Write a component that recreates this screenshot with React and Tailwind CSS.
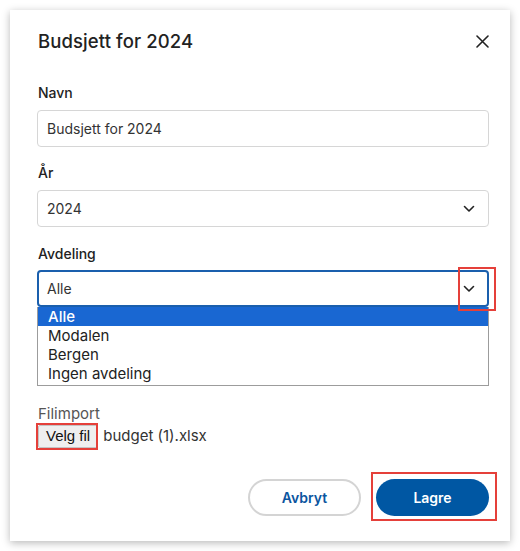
import React from 'react';

const font = { fontFamily: 'Inter, "Noto Sans", sans-serif' };

const Chevron = () => (
  <svg width="12" height="8" viewBox="0 0 12 8" fill="none" stroke="#222" strokeWidth="1.6" strokeLinecap="round" strokeLinejoin="round">
    <path d="M1.5 1.5 6 6l4.5-4.5" />
  </svg>
);

const App = () => {
  const options = ['Alle', 'Modalen', 'Bergen', 'Ingen avdeling'];

  return (
    <div className="w-[520px] h-[551px] bg-white p-[10px]" style={font}>
      <div className="relative w-[500px] h-[531px] bg-white shadow-[0_2px_8px_rgba(0,0,0,0.28)] pl-[27px] pr-[21px] pt-[17px]">
        {/* Header */}
        <div className="flex items-center justify-between pl-[1px] pr-[1px]">
          <h2 className="text-[18.5px] leading-[28px] font-medium text-[#222] tracking-[0.1px]">Budsjett for 2024</h2>
          <button className="w-[14px] h-[14px] flex items-center justify-center mr-[-1px]">
            <svg width="13" height="13" viewBox="0 0 13 13" stroke="#222" strokeWidth="1.6" strokeLinecap="round">
              <path d="M1 1l11 11M12 1 1 12" />
            </svg>
          </button>
        </div>

        {/* Navn */}
        <label className="block mt-[28px] pl-[1px] text-[14px] leading-[20px] font-medium text-[#222]">Navn</label>
        <div className="mt-[7px] h-[37px] rounded-[4px] border border-[#d6d6d6] flex items-center px-[9px] text-[14px] text-[#333]">
          Budsjett for 2024
        </div>

        {/* År */}
        <label className="block mt-[16px] pl-[1px] text-[14px] leading-[20px] font-medium text-[#222]">År</label>
        <div className="mt-[7px] h-[37px] rounded-[4px] border border-[#d6d6d6] flex items-center justify-between pl-[9px] pr-[13px] text-[14px] text-[#333]">
          <span>2024</span>
          <Chevron />
        </div>

        {/* Avdeling */}
        <label className="block mt-[17px] pl-[1px] text-[14px] leading-[20px] font-medium text-[#222]">Avdeling</label>
        <div className="mt-[6px] h-[37px] rounded-[4px] border-2 border-[#1a5fad] flex items-center justify-between pl-[8px] pr-[12px] text-[14px] text-[#333]">
          <span>Alle</span>
          <Chevron />
        </div>
        <div className="border border-t-0 border-[#9c9c9c] pb-[2px] text-[15px] leading-[19px] text-[#222]">
          {options.map((o, i) => (
            <div key={o} className={`pl-[10px] ${i === 0 ? 'bg-[#1967d2] text-white font-medium' : ''}`}>{o}</div>
          ))}
        </div>

        {/* Filimport */}
        <div className="mt-[18px] pl-[1px] text-[15px] leading-[20px] text-[#555]">Filimport</div>
        <div className="mt-[1px] flex items-center gap-[5px] pl-[1px]">
          <span className="h-[23px] px-[7px] bg-[#efefef] border border-[#c4c4c4] rounded-[2px] flex items-center text-[15px] text-[#111]" style={{ fontFamily: '"Liberation Sans", Arial, sans-serif' }}>
            Velg fil
          </span>
          <span className="text-[15px] text-[#333]">budget (1).xlsx</span>
        </div>

        {/* Footer buttons */}
        <div className="mt-[31px] flex justify-end gap-[15px]">
          <button className="w-[113px] h-[37px] rounded-full border-2 border-[#d4d4d4] text-[14px] font-semibold text-[#0b559f]">Avbryt</button>
          <button className="w-[113px] h-[37px] rounded-full bg-[#0057a3] text-[14px] font-semibold text-white">Lagre</button>
        </div>

        {/* Red annotation outlines */}
        <div className="absolute left-[448px] top-[257px] w-[38px] h-[44px] border-2 border-[#e5403a] pointer-events-none" />
        <div className="absolute left-[26px] top-[413px] w-[62px] h-[27px] border-2 border-[#e5403a] pointer-events-none" />
        <div className="absolute left-[361px] top-[462px] w-[126px] h-[49px] border-2 border-[#e5403a] pointer-events-none" />
      </div>
    </div>
  );
};

export default App;
